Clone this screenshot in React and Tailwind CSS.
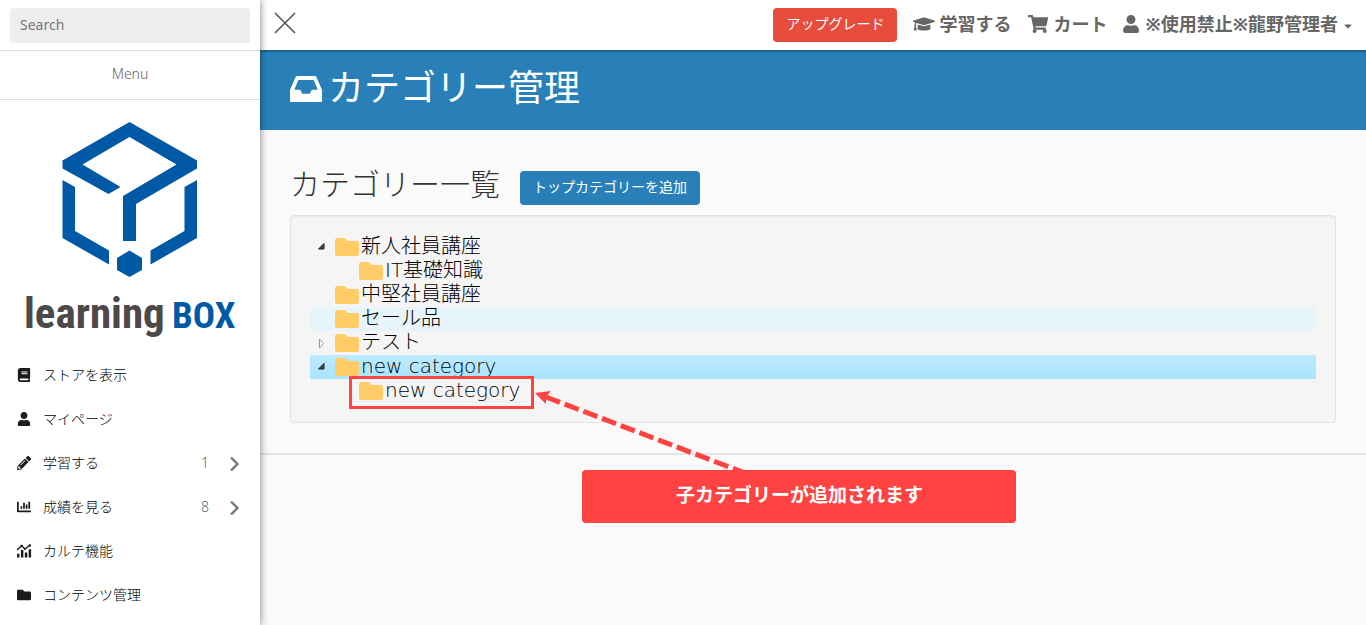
import React, { useState } from 'react';
import {
    FaBook, FaUser, FaPencilAlt, FaChartBar, FaFolder,
    FaGraduationCap, FaShoppingCart, FaCaretDown,
} from 'react-icons/fa';

const ChartLineIcon = ({ className }) => (
    <svg viewBox="0 0 16 15" className={className} fill="currentColor" aria-hidden="true">
        <path d="M0.5 6.5 L5.5 1.8 L9 5.3 L14.5 1.2" fill="none" stroke="currentColor" strokeWidth="1.4" />
        <path d="M0.5 10.5h2.6v4H0.5z M4.7 6.5h2.6v8H4.7z M8.9 9h2.6v5.5H8.9z M13 5.5h2.6v9H13z" />
        <circle cx="5.5" cy="2" r="1.3" />
        <circle cx="9" cy="5.2" r="1.3" />
        <circle cx="14.3" cy="1.5" r="1.3" />
    </svg>
);

const InboxIcon = ({ className }) => (
    <svg viewBox="0 0 32 26" className={className} fill="currentColor" fillRule="evenodd" aria-hidden="true">
        <path d="M7.500 0 H24.500 Q26 0 26.600 1.400 L31.600 13 Q32 14 32 15 V24.800 Q32 26 30.800 26 H1.200 Q0 26 0 24.800 V15 Q0 14 0.400 13 L5.400 1.400 Q6 0 7.500 0 Z M8.300 4 L4.300 13.800 H10.200 L12.200 17.800 H19.800 L21.800 13.800 H27.700 L23.700 4 Z" />
    </svg>
);

const menuItems = [
    { label: 'ストアを表示', icon: FaBook },
    { label: 'マイページ', icon: FaUser },
    { label: '学習する', icon: FaPencilAlt, count: 1 },
    { label: '成績を見る', icon: FaChartBar, count: 8 },
    { label: 'カルテ機能', icon: ChartLineIcon },
    { label: 'コンテンツ管理', icon: FaFolder },
];

const categories = [
    { id: 1, label: '新人社員講座', state: 'open' },
    { id: 2, label: 'IT基礎知識', child: true },
    { id: 3, label: '中堅社員講座' },
    { id: 4, label: 'セール品', bg: 'bg-[#e7f4f9]' },
    { id: 5, label: 'テスト', state: 'closed' },
    { id: 6, label: 'new category', state: 'open', bg: 'bg-linear-to-b from-[#beebff] to-[#a8e4ff]' },
    { id: 7, label: 'new category', child: true, marked: true },
];

const Logo = () => (
    <svg viewBox="0 0 260 240" className="w-full font-['Roboto_Condensed','Roboto',sans-serif] font-bold" role="img" aria-label="learningBOX">
        <g fill="#0059a5">
            <path d="M129.500 12 L197 50.500 V58.500 L136 94 V131 H123 V86 L176.500 54.500 L129.500 27 L82.500 54.500 L120.500 77 L108.500 84 L62.500 58.500 V50.500 Z" />
            <path d="M62.500 70 L75 77 V121 L109 140.500 V154.500 L62.500 128 Z" />
            <path d="M197 70 L184.500 77 V121 L150.500 140.500 V154.500 L197 128 Z" />
            <path d="M129.500 140.500 L142 148 V160 L129.500 167 L117 160 V148 Z" />
        </g>
        <text x="24" y="218" fontSize="43" fill="#4c4948">learning</text>
        <text x="172" y="218" fontSize="37" fill="#0059a5">BOX</text>
    </svg>
);

const Twisty = ({ state }) => (
    <svg viewBox="0 0 25 24" className="h-6 w-[25px] shrink-0" aria-hidden="true">
        {state === 'open' && <path d="M14 8.500 V14 H8.500 Z" fill="#444" stroke="#222" />}
        {state === 'closed' && <path d="M9.500 8 L13.500 12.500 L9.500 17 Z" fill="#fff" stroke="#999" />}
    </svg>
);

const Sidebar = () => (
    <aside className="z-10 w-65 shrink-0 bg-white shadow-[0_0_8px_rgba(0,0,0,0.5)]">
        <div className="h-[51px] border-b border-[#dedede] px-2.5 py-2">
            <input
                type="text"
                aria-label="Search"
                placeholder="Search"
                className="h-[35px] w-full rounded bg-[#eeeeee] px-2.5 pb-0.5 text-sm font-normal placeholder:text-[#777] focus:outline-none"
            />
        </div>
        <div className="h-[49px] border-b border-[#dedede] text-center text-sm leading-[46px] text-[#666]">Menu</div>
        <nav>
            <a href="#home" className="block h-[253px] pt-2.5">
                <Logo />
            </a>
            <ul>
                {menuItems.map(({ label, icon: Icon, count }) => (
                    <li key={label}>
                        <a href="#menu" className="flex h-11 items-center pr-5 pl-4 text-sm text-black">
                            <Icon className="h-3.5 w-4 shrink-0 text-[#1b1b1b]" />
                            <span className="ml-[11px] flex-1">{label}</span>
                            {count && (
                                <>
                                    <span className="mr-5 text-[#666]">{count}</span>
                                    <svg viewBox="0 0 11 15" className="h-[15px] w-[11px]" aria-hidden="true">
                                        <path d="M2 1.500 L8.500 8 L2 14.500" fill="none" stroke="#777" strokeWidth="2.400" />
                                    </svg>
                                </>
                            )}
                        </a>
                    </li>
                ))}
            </ul>
        </nav>
    </aside>
);

const Header = ({ onToggle }) => (
    <header className="flex h-[50px] items-center justify-between bg-white pr-3 pb-0.5 pl-3.5">
        <button type="button" onClick={onToggle} aria-label="Close menu">
            <svg viewBox="0 0 22 22" className="mb-0.5 h-[22px] w-[22px]" aria-hidden="true">
                <path d="M1 1 L21 21 M21 1 L1 21" stroke="#555" strokeWidth="1.600" />
            </svg>
        </button>
        <div className="flex items-center gap-4 text-lg font-bold text-[#666]">
            <button type="button" className="mt-0.5 h-[34px] rounded bg-[#e74c3c] px-[13px] pb-0.5 text-sm font-normal text-white">
                アップグレード
            </button>
            <a href="#learn" className="flex items-center gap-1">
                <FaGraduationCap className="h-[18px] w-[22px]" />学習する
            </a>
            <a href="#cart" className="flex items-center gap-1">
                <FaShoppingCart className="h-[18px] w-[22px]" />カート
            </a>
            <a href="#user" className="flex items-center">
                <FaUser className="mr-1.5 h-[18px] w-4" />※使用禁止※龍野管理者
                <FaCaretDown className="mt-1 ml-1 h-3 w-3" />
            </a>
        </div>
    </header>
);

// Dashed arrow and message box shown after a child category is added
const AddedCallout = () => (
    <div className="pointer-events-none absolute top-3 left-full ml-[3px] w-120">
        <svg viewBox="0 0 220 79" className="h-[79px] w-[220px]" aria-hidden="true">
            <path d="M12 6 L211 82" stroke="#ff4343" strokeWidth="5" strokeDasharray="15 5" fill="none" />
            <path d="M1 2 L17 0 L12 6 L12 13 Z" fill="#ff4343" />
        </svg>
        <p className="ml-12 h-[53px] w-[434px] rounded bg-[#ff4343] text-center text-[19px] leading-[50px] font-bold text-white">
            子カテゴリーが追加されます
        </p>
    </div>
);

const CategoryTree = () => (
    <ul className="rounded border border-[#e3e3e3] bg-[#f5f5f5] p-[19px] font-['DejaVu_Sans','Noto_Sans_CJK_JP',sans-serif] text-xl leading-6 text-black shadow-[inset_0_1px_1px_rgba(0,0,0,0.05)]">
        {categories.map((item) => (
            <li key={item.id} className={`flex h-6 items-center ${item.bg || ''}`}>
                {item.child && <span className="w-6" />}
                <Twisty state={item.state} />
                <span className="relative flex items-center gap-0.5">
                    <FaFolder className="h-6 w-6 text-[#ffcc66]" />
                    <span className="pb-0.5 leading-[22px] whitespace-nowrap">{item.label}</span>
                    {item.marked && (
                        <span className="absolute -top-[3px] -right-3.5 -bottom-1.5 -left-2.5 border-3 border-[#ff4343]">
                            <AddedCallout />
                        </span>
                    )}
                </span>
            </li>
        ))}
    </ul>
);

const App = () => {
    const [menuOpen, setMenuOpen] = useState(true);

    return (
        <div className="flex min-h-screen overflow-hidden bg-[#fafafa] font-['Noto_Sans','Noto_Sans_CJK_JP',sans-serif] font-light">
            {menuOpen && <Sidebar />}
            <div className="min-w-0 flex-1">
                <Header onToggle={() => setMenuOpen(!menuOpen)} />
                <h1 className="flex h-20 items-center gap-1.5 bg-[#2980b9] px-[30px] pb-1 text-4xl font-normal text-white shadow-[inset_0_2px_2px_rgba(0,0,0,0.25)]">
                    <InboxIcon className="mt-0.5 h-[26px] w-8" />カテゴリー管理
                </h1>
                <main className="border-b-2 border-[#e3e3e3] px-[30px] pt-9 pb-[30px]">
                    <div className="mb-2.5 flex h-[39px] items-center gap-5">
                        <h2 className="pb-1 text-3xl text-[#333]">カテゴリー一覧</h2>
                        <button type="button" className="mt-1 h-[34px] rounded bg-[#2980b9] px-[13px] pb-0.5 text-sm font-normal text-white">
                            トップカテゴリーを追加
                        </button>
                    </div>
                    <CategoryTree />
                </main>
            </div>
        </div>
    );
};

export default App;
